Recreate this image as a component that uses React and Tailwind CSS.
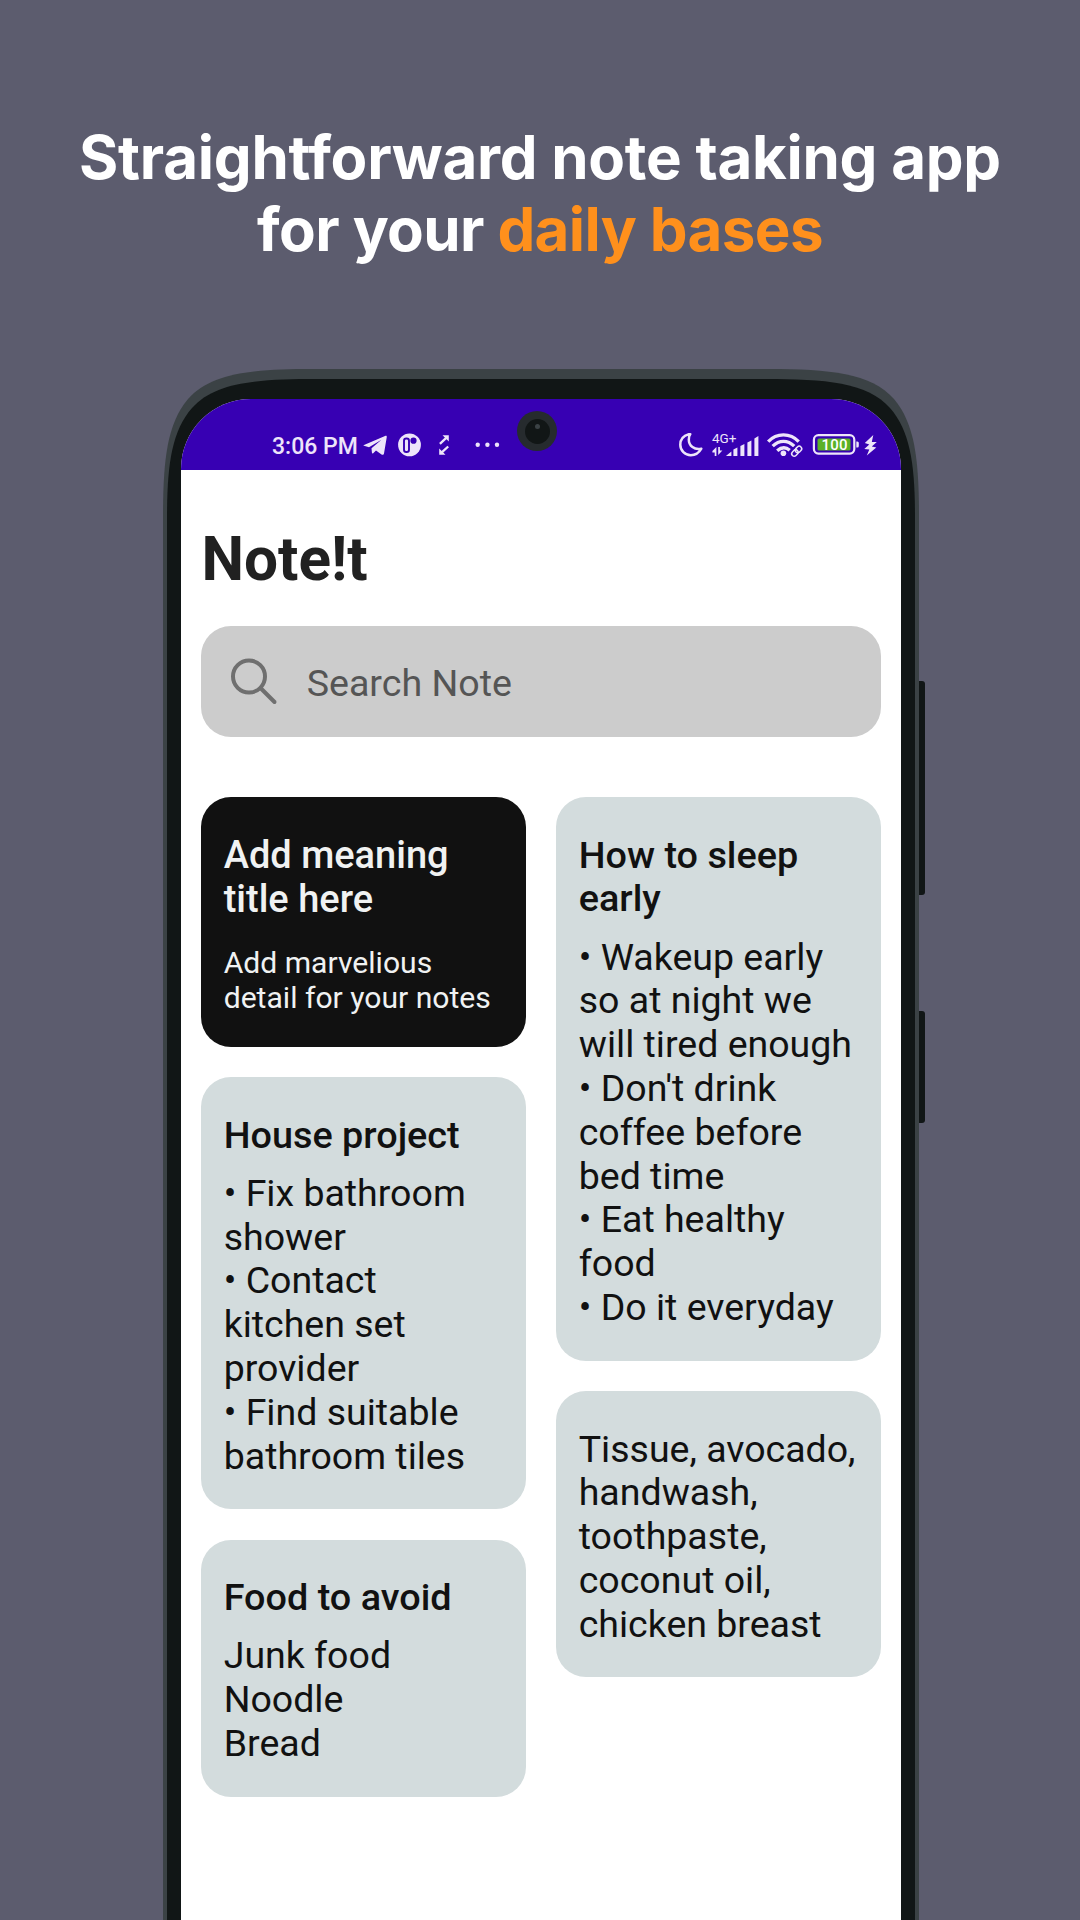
const INK = '#ede4fa';

/* Device body: soft-cornered rim, bezel and side keys */
function PhoneBody() {
  return (
    <svg className="pointer-events-none absolute left-0 top-0 h-full w-full" viewBox="0 0 763 1551" aria-hidden="true">
      <rect x="750" y="312" width="12" height="214" rx="3" fill="#111616" />
      <rect x="750" y="642" width="12" height="112" rx="3" fill="#111616" />
      <path d="M0 1560V150C0 95 3 56 25 30C48 4 90 0 150 0H606C666 0 708 4 731 30C753 56 756 95 756 150V1560Z" fill="#3b4245" />
      <path d="M4 1560V150C4 98 8 63 29 39C52 13 94 10 154 10H602C662 10 704 13 727 39C748 63 752 98 752 150V1560Z" fill="#111616" />
    </svg>
  );
}

function Status() {
  return (
    <div className="flex h-[71px] shrink-0 items-end bg-[#3700b3] pb-[12px] pl-[91.500px] pr-[22px]">
      <div className="flex h-6 items-center whitespace-nowrap text-[23px] font-medium leading-6 text-[#ede4fa]">
        <span className="w-[90px] pt-px">3:06 PM</span>
      </div>
      <svg className="h-6 w-[140px] shrink-0 overflow-visible" viewBox="0 0 140 24" fill={INK}>
        <path d="M2 11L23 2C24.500 1.500 25 2 24.700 3.500L22 19.500C21.700 21 20.500 21.200 19.500 20.400L14 16.500L11.200 19.200C10.700 19.600 10 19.400 9.900 18.500L9.500 14.200L19.500 5.700L7 13.200L2 11.800C1 11.500 1.200 11.300 2 11Z" />
        <circle cx="47.500" cy="10.900" r="11.400" />
        <rect x="42" y="4.500" width="5" height="13.500" rx="2.300" fill="none" stroke="#3700b3" strokeWidth="1.900" />
        <circle cx="51.500" cy="6.700" r="3.100" fill="#3700b3" />
        <path d="M80.500 1.200H86.800V7.500ZM77.200 14.500V20.800H83.500Z" />
        <path d="M77.900 9.800L84.500 3.600M86.200 12.500L79.500 18.700" stroke={INK} strokeWidth="2.300" />
        <circle cx="115.700" cy="10.700" r="2.200" /><circle cx="125.400" cy="10.700" r="2.200" /><circle cx="135" cy="10.700" r="2.200" />
      </svg>
      <div className="flex-1" />
      <svg className="h-[26px] w-[200px] shrink-0 overflow-visible" viewBox="0 0 200 26" fill={INK} fontFamily="Roboto, sans-serif">
        <path transform="translate(-.7 -.8)" d="M10.500 3C5 4.500 2 8.500 2 13.500A10.500 10.500 0 0 0 12.500 24C17 24 20.500 22 23 17.500C16 19 10.500 14.500 10.500 8.500C10.500 6 10.700 4.500 12 3Z" fill="none" stroke={INK} strokeWidth="2.500" strokeLinejoin="round" />
        <g transform="translate(-.6 0)">
          <text x="33.500" y="11.400" fontSize="13.500">4G+</text>
          <path d="M34 19L38 15V24H36.300V20.500H34ZM39.800 15H41.500V18.500H44L39.800 23ZM47.500 24L53 19.500V24ZM55 17.500L59 15.500V24H55ZM62 14L66 12V24H62ZM69 10.500L73 8.500V24H69ZM76 6.500L80 4V24H76Z" />
        </g>
        <g transform="translate(-.3 -1.300)">
          <g fill="none" stroke={INK} strokeWidth="3.300">
            <path d="M89.500 11C98 2 111.500 2 120 11" /><path d="M94 15.500C100.500 9 109 9 115.500 15.500" /><path d="M98.500 20C103 16 107 16 111 19.500" />
          </g>
          <circle cx="104.700" cy="22.500" r="2.800" />
          <g fill="none" stroke={INK} strokeWidth="1.500" transform="rotate(-45 118 20.500)"><rect x="112" y="18" width="7" height="5" rx="2.500" /><rect x="117" y="18" width="7" height="5" rx="2.500" /></g>
        </g>
        <rect x="134.900" y="3.200" width="40.400" height="18.400" rx="4.500" fill="none" stroke={INK} strokeWidth="2.200" />
        <rect x="138.500" y="6.500" width="33" height="12" rx="1.500" fill="#5ab127" />
        <text x="142.500" y="18" fontSize="15" fontWeight="500" textLength="26" fill="#fff">100</text>
        <path d="M177.300 9.400H178.300Q179.800 9.400 179.800 10.900V13.900Q179.800 15.400 178.300 15.400H177.300Z" />
        <path transform="translate(.3 -.9)" d="M194 4L185.500 12L190 13.500L185 18L190 18.500L187.500 24.500L197 16.500L192.500 15.500L197.500 11H192.500Z" />
      </svg>
    </div>
  );
}

function Note({ title, lines, className = '' }) {
  return (
    <article className={`rounded-[30px] bg-[#d3dcdd] pl-[22.500px] pt-[36.600px] text-[37.500px] leading-[43.800px] text-[#111] ${className}`}>
      {title && <h2 className="mb-[14.500px] whitespace-pre-line text-[37.800px] font-medium">{title}</h2>}
      <p className="whitespace-pre">{lines.join('\n')}</p>
    </article>
  );
}

export default function App() {
  return (
    <main className="flex h-[1920px] w-[1080px] flex-col overflow-hidden bg-[#5c5c6e]">
      <h1 className="h-[369px] shrink-0 pt-[121px] text-center font-['Inter',sans-serif] text-[60px] font-bold leading-[72px] text-white">
        <span className="block tracking-[-0.260px]">Straightforward note taking app</span>
        <span className="block tracking-[-0.620px]">for your <span className="text-[#ff901c]">daily bases</span></span>
      </h1>
      <div className="relative ml-[163px] h-[1551px] w-[763px] shrink-0 pl-[17.500px] pt-[30px] font-['Roboto',sans-serif]">
        <PhoneBody />
        <div className="relative flex h-[1521px] w-[720px] flex-col overflow-hidden rounded-t-[70px] bg-white">
          <Status />
          <div className="pl-[20.700px] pr-[19.700px]">
            <h2 className="pl-[0.300px] pt-[54.500px] text-[60.300px] font-bold leading-[70px] text-[#212121]">Note!t</h2>
            <div className="mt-[31px] flex h-[111px] items-center rounded-[30px] bg-[#ccc] pl-[29px]">
              <svg className="h-[48px] w-[48px]" viewBox="0 0 48 48" fill="none" stroke="#6f6f6f" strokeWidth="4" strokeLinecap="round">
                <circle cx="19" cy="19.500" r="16" /><path d="M31 31.500L44.500 45" />
              </svg>
              <span className="ml-[28.500px] mt-[5px] text-[37.600px] text-[#555]">Search Note</span>
            </div>
            <div className="mt-[60.500px] flex items-start justify-between">
              <div className="flex w-[324.600px] flex-col gap-[30.500px]">
                <article className="h-[249.500px] rounded-[30px] bg-[#111] pl-[22.500px] pt-[36.800px] text-[#f0f2f2]">
                  <h2 className="text-[38px] font-medium leading-[43.800px]">Add meaning<br />title here</h2>
                  <p className="mt-[23.500px] text-[30.100px] leading-[35.500px]">Add marvelious<br />detail for your notes</p>
                </article>
                <Note className="h-[432px]" title="House project" lines={['• Fix bathroom', 'shower', '• Contact', 'kitchen set', 'provider', '• Find suitable', 'bathroom tiles']} />
                <Note className="h-[257px]" title="Food to avoid" lines={['Junk food', 'Noodle', 'Bread']} />
              </div>
              <div className="flex w-[324.600px] flex-col gap-[30.500px]">
                <Note className="h-[563.500px]" title={'How to sleep\nearly'} lines={['• Wakeup early', 'so at night we', 'will tired enough', "• Don't drink", 'coffee before', 'bed time', '• Eat healthy', 'food', '• Do it everyday']} />
                <Note className="h-[286px]" lines={['Tissue, avocado,', 'handwash,', 'toothpaste,', 'coconut oil,', 'chicken breast']} />
              </div>
            </div>
          </div>
        </div>
        <div className="absolute left-[354px] top-[42px] flex h-10 w-10 items-center justify-center rounded-full bg-[#262b2e]">
          <div className="flex h-[25px] w-[25px] justify-center rounded-full bg-[#111616] pt-[5px]">
            <div className="h-[5px] w-[5px] rounded-full bg-[#3b4245]" />
          </div>
        </div>
      </div>
    </main>
  );
}
